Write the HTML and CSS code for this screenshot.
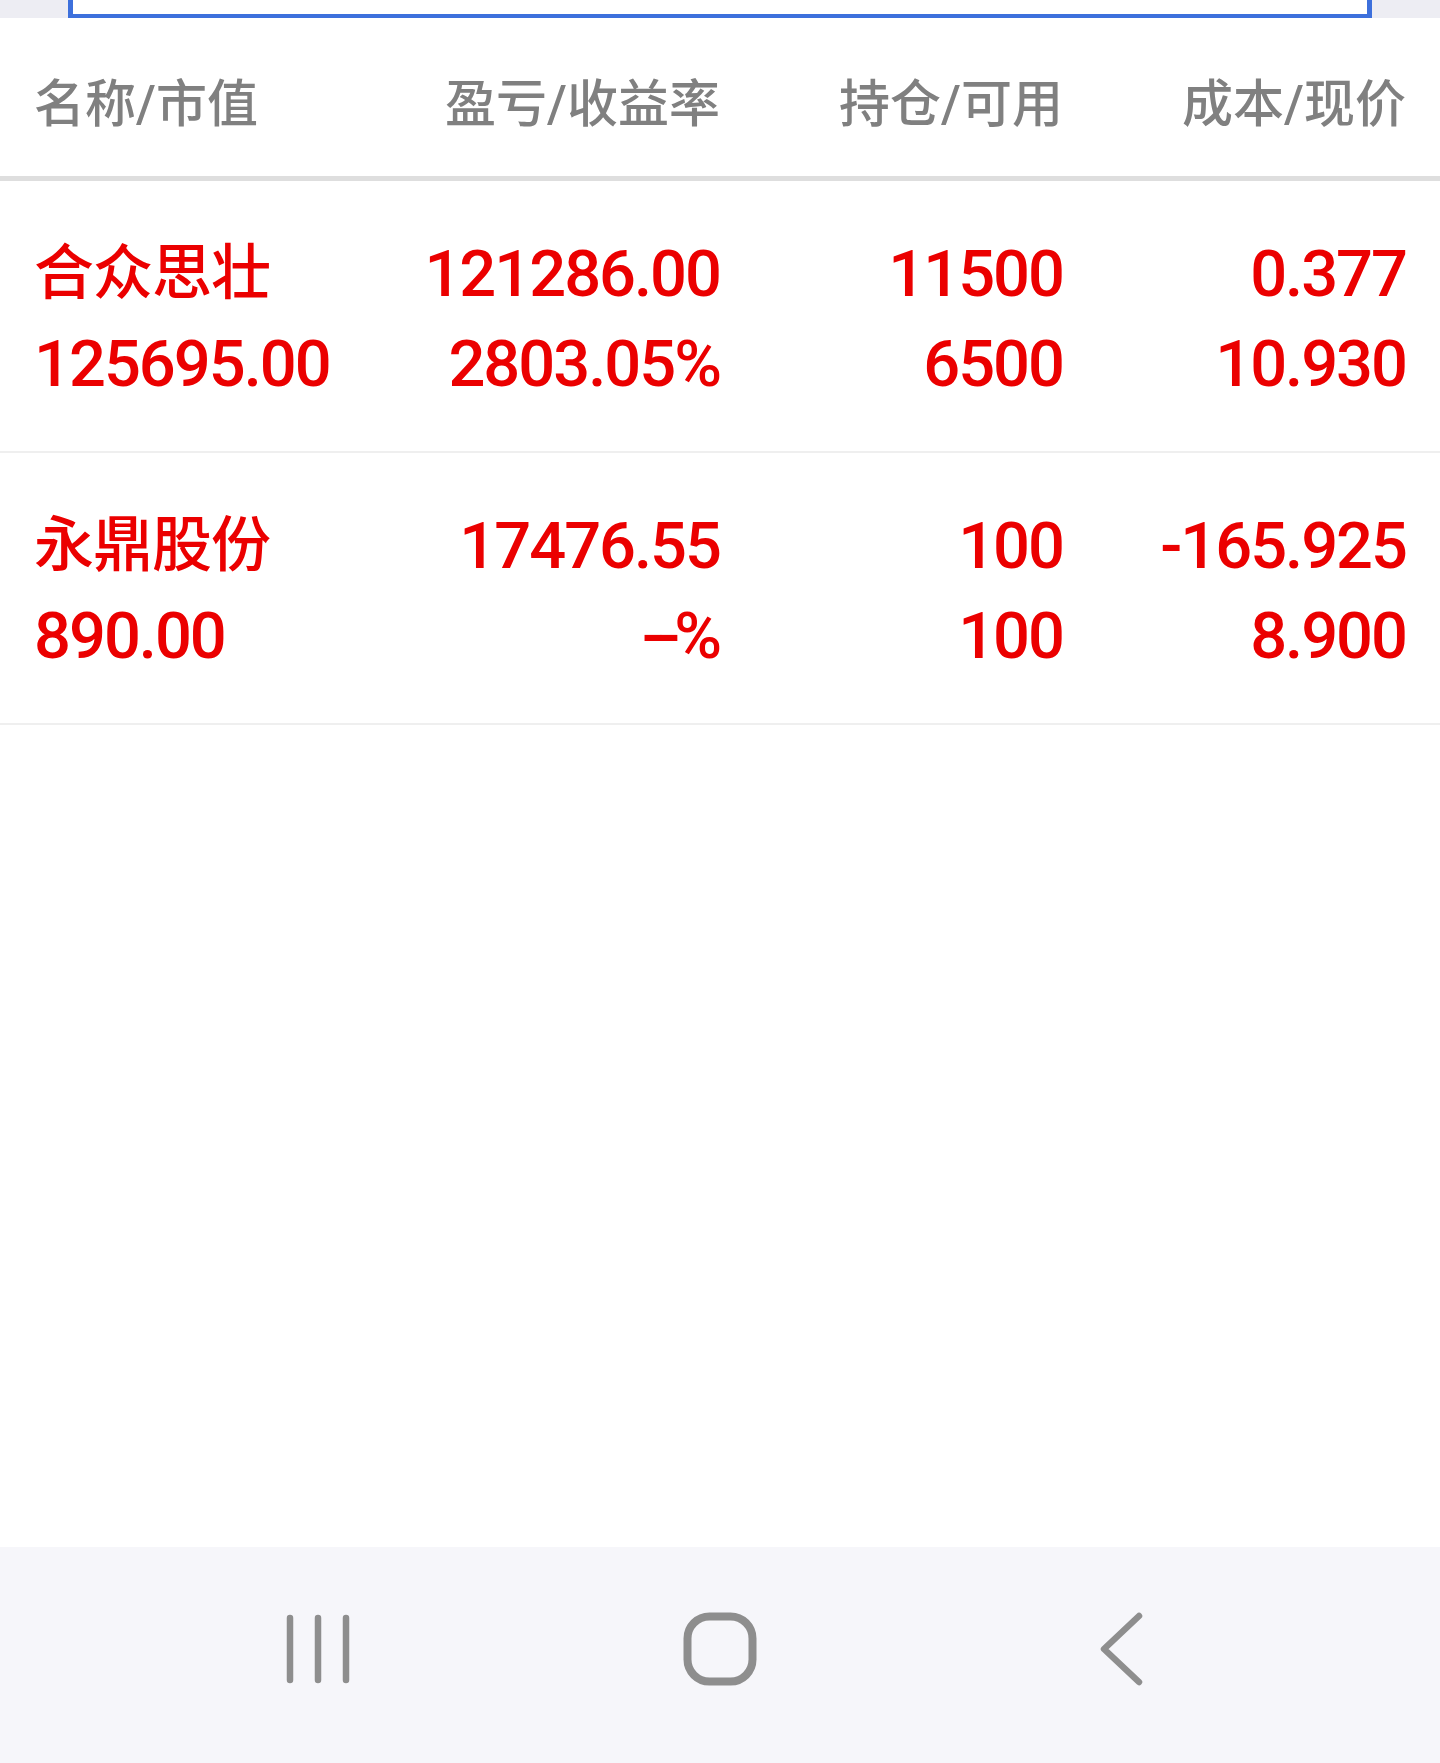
FILE: index.html
```html
<!DOCTYPE html>
<html lang="zh-CN">

<head>
    <meta charset="UTF-8">
    <meta name="viewport" content="width=device-width, initial-scale=1.0">
    <title>持仓</title>
    <link rel="stylesheet" href="styles.css">
</head>

<body>
    <div class="search-strip">
        <div class="search-box"></div>
    </div>

    <div class="table-head">
        <span class="col-left">名称/市值</span>
        <span>盈亏/收益率</span>
        <span>持仓/可用</span>
        <span>成本/现价</span>
    </div>

    <div class="holdings">
        <div class="holding-row">
            <div class="cell col-left">
                <div class="line name">合众思壮</div>
                <div class="line">125695.00</div>
            </div>
            <div class="cell">
                <div class="line">121286.00</div>
                <div class="line">2803.05%</div>
            </div>
            <div class="cell">
                <div class="line">11500</div>
                <div class="line">6500</div>
            </div>
            <div class="cell">
                <div class="line">0.377</div>
                <div class="line">10.930</div>
            </div>
        </div>
        <div class="holding-row">
            <div class="cell col-left">
                <div class="line name">永鼎股份</div>
                <div class="line">890.00</div>
            </div>
            <div class="cell">
                <div class="line">17476.55</div>
                <div class="line"><span class="dash">--</span>%</div>
            </div>
            <div class="cell">
                <div class="line">100</div>
                <div class="line">100</div>
            </div>
            <div class="cell">
                <div class="line">-165.925</div>
                <div class="line">8.900</div>
            </div>
        </div>
    </div>

    <!-- 안드로이드 하단 네비게이션 -->
    <nav class="nav-bar">
        <div class="nav-item">
            <svg width="64" height="70" viewBox="0 0 64 70">
                <path d="M4 4V66M32 4V66M60 4V66" fill="none" stroke="#8e8e8e" stroke-width="6.5" stroke-linecap="round" />
            </svg>
        </div>
        <div class="nav-item">
            <svg width="74" height="74" viewBox="0 0 74 74">
                <rect x="4.5" y="4.5" width="65" height="65" rx="22" fill="none" stroke="#8e8e8e" stroke-width="8" />
            </svg>
        </div>
        <div class="nav-item">
            <svg width="46" height="74" viewBox="0 0 46 74">
                <path d="M40 4L5 37L40 70" fill="none" stroke="#8e8e8e" stroke-width="6.5" stroke-linecap="round" stroke-linejoin="round" />
            </svg>
        </div>
    </nav>
</body>

</html>
```

FILE: styles.css
```css
body {
    margin: 0;
    height: 100vh;
    display: flex;
    flex-direction: column;
    background: #fff;
    font-family: Roboto, "Noto Sans CJK SC", sans-serif;
}

.search-strip {
    flex-shrink: 0;
    height: 18px;
    padding: 0 68px;
    background-color: #ededf3;
}

.search-box {
    height: 100%;
    box-sizing: border-box;
    border: 5px solid #3d70dc;
    border-top: none;
    border-bottom-width: 4px;
    background: #fff;
}

.table-head {
    flex-shrink: 0;
    display: grid;
    grid-template-columns: repeat(4, 1fr);
    align-items: center;
    height: 163px;
    box-sizing: border-box;
    padding: 15px 34px 0;
    border-bottom: 5px solid #dedede;
    font-size: 51px;
    font-weight: 500;
    line-height: 1;
    color: #808080;
    text-align: right;
}

.col-left {
    text-align: left;
}

.holdings {
    flex: 1;
}

.holding-row {
    display: grid;
    grid-template-columns: repeat(4, 1fr);
    padding: 48px 34px 42px;
    border-bottom: 2px solid #efefef;
    color: #eb0000;
    text-align: right;
}

.line {
    font-size: 65px;
    font-weight: 500;
    line-height: 90px;
    letter-spacing: -2px;
    white-space: nowrap;
}

.line.name {
    font-size: 60px;
    letter-spacing: -1px;
}

/* 두 개의 하이픈이 붙어 보이게 */
.dash {
    letter-spacing: -6px;
}

.nav-bar {
    flex-shrink: 0;
    height: 216px;
    box-sizing: border-box;
    padding-bottom: 12px;
    display: grid;
    grid-template-columns: repeat(3, 402px);
    justify-content: center;
    align-items: center;
    background-color: #f6f6fa;
}

.nav-item {
    display: flex;
    justify-content: center;
    align-items: center;
}
```
